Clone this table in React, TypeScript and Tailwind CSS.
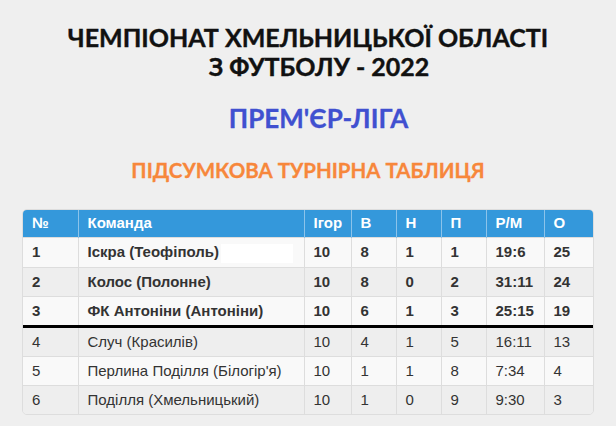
const headers = ["№", "Команда", "Ігор", "В", "Н", "П", "Р/М", "О"];

const widths = ["w-[55px]", "w-[226px]", "w-[47px]", "w-[45px]", "w-[45px]", "w-[45px]", "w-[58px]", "w-[49px]"];

const rows = [
  ["1", "Іскра (Теофіполь)", "10", "8", "1", "1", "19:6", "25"],
  ["2", "Колос (Полонне)", "10", "8", "0", "2", "31:11", "24"],
  ["3", "ФК Антоніни (Антоніни)", "10", "6", "1", "3", "25:15", "19"],
  ["4", "Случ (Красилів)", "10", "4", "1", "5", "16:11", "13"],
  ["5", "Перлина Поділля (Білогір'я)", "10", "1", "1", "8", "7:34", "4"],
  ["6", "Поділля (Хмельницький)", "10", "1", "0", "9", "9:30", "3"],
];

export default function App() {
  return (
    <div className="min-h-[426px] w-[616px] bg-[#efefef] pt-[23px] text-center font-['Lato',sans-serif]">
      <h1 className="text-[25px] leading-[28.5px] font-bold text-[#111] [-webkit-text-stroke:0.4px_#111]">
        <span className="block">ЧЕМПІОНАТ ХМЕЛЬНИЦЬКОЇ ОБЛАСТІ</span>
        <span className="block pl-[22px]">З ФУТБОЛУ - 2022</span>
      </h1>
      <h2 className="mt-[23px] pl-[21px] text-[26px] leading-[1.2] font-bold text-[#4050d0] [-webkit-text-stroke:0.3px_#4050d0]">
        ПРЕМ'ЄР-ЛІГА
      </h2>
      <h3 className="mt-[24px] text-[20.5px] leading-[24px] font-bold text-[#f7873b] [-webkit-text-stroke:0.3px_#f7873b]">
        ПІДСУМКОВА ТУРНІРНА ТАБЛИЦЯ
      </h3>

      <div className="mx-[22px] mt-[27px] overflow-hidden rounded-[5px] border border-[#dddddd] text-left font-['Liberation_Sans',Arial,sans-serif] text-[15px] leading-[20px] text-[#333]">
        <table className="w-full table-fixed border-collapse">
          <thead>
            <tr className="bg-[#3498db] text-white">
              {headers.map((h, i) => (
                <th
                  key={h}
                  className={`${widths[i]} border-l border-[#8cc3ea] px-[9px] py-[3px] pb-[4px] font-bold first:border-l-0`}
                >
                  {h}
                </th>
              ))}
            </tr>
          </thead>
          <tbody>
            {rows.map((r, ri) => (
              <tr
                key={r[0]}
                className={`${ri % 2 === 0 ? "bg-[#f9f9f9]" : "bg-[#eeeeee]"} ${ri < 3 ? "font-bold" : ""} ${
                  ri === 3 ? "border-t-[3px] border-t-black" : "border-t border-t-[#dddddd]"
                }`}
              >
                {r.map((c, ci) => (
                  <td key={ci} className="border-l border-[#dddddd] px-[9px] py-[4px] first:border-l-0">
                    {c}
                    {ri === 0 && ci === 1 && (
                      <span className="ml-[2px] inline-block h-[19px] w-[72px] bg-white align-middle" />
                    )}
                  </td>
                ))}
              </tr>
            ))}
          </tbody>
        </table>
      </div>
    </div>
  );
}
